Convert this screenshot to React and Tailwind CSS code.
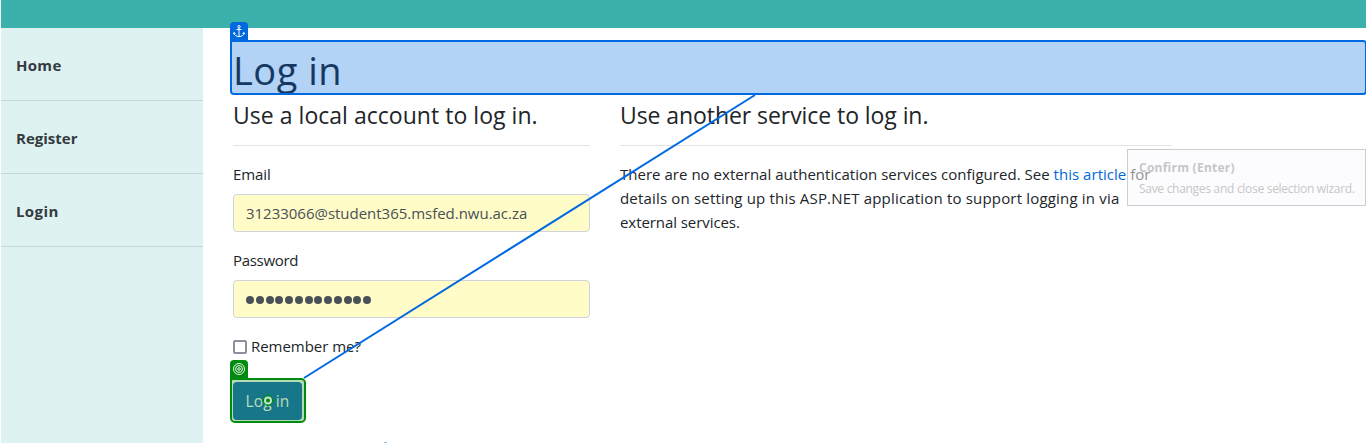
const NAV = [
  { label: "Home", className: "tracking-[0.3px]" },
  { label: "Register", className: "tracking-[0px]" },
  { label: "Login", className: "tracking-[0.4px]" },
];

function Field({ label, labelClass, children }) {
  return (
    <div className="mb-4 h-[70px]">
      <div className="mb-2 h-6 leading-6">
        <span className={labelClass}>{label}</span>
      </div>
      <div className="flex h-[38px] items-center rounded-[4px] border border-[#ced4da] bg-[#fffcc8] px-3 text-[#495057]">
        {children}
      </div>
    </div>
  );
}

export default function App() {
  return (
    <div className="relative flex h-[443px] w-[1366px] flex-col overflow-hidden bg-white pl-px font-['Open_Sans','Noto_Sans',sans-serif] text-[15px] text-[#212529]">
      <header className="h-7 shrink-0 bg-[#3cb0aa]" />
      <div className="flex grow">
        <nav className="w-[202px] shrink-0 bg-[#def2f1]">
          {NAV.map((n) => (
            <a key={n.label} className="flex h-[73px] items-center border-b border-[#c3d9d9] pt-[3px] pl-[15px] font-bold text-[#343a40]">
              <span className={n.className}>{n.label}</span>
            </a>
          ))}
        </nav>
        <main className="flex grow flex-col pt-[18px] pl-[30px]">
          <h1 className="mb-2 h-12 text-[38px] leading-[48px]"><span className="tracking-[0.5px]">Log in</span></h1>
          <div className="flex gap-[30px]">
            <section className="w-[357px] shrink-0">
              <h4 className="h-[29px] text-[23px] leading-[27px]"><span className="tracking-[0.03px]">Use a local account to log in.</span></h4>
              <hr className="mt-[14px] mb-4 border-[#e3e3e4]" />
              <Field label="Email" labelClass="tracking-[-0.1px]">
                <span className="tracking-[-0.02px]">31233066@student365.msfed.nwu.ac.za</span>
              </Field>
              <Field label="Password" labelClass="tracking-[-0.3px]">
                <span className="flex gap-[1.75px] pt-[2px]">
                  {Array.from({ length: 13 }, (_, i) => (
                    <i key={i} className="size-2 rounded-full bg-[#495057]" />
                  ))}
                </span>
              </Field>
              <label className="flex h-6 items-center gap-1">
                <span className="mt-px size-[14px] rounded-[2px] border-2 border-[#8f8f9d] bg-white" />
                <span className="tracking-[-0.03px]">Remember me?</span>
              </label>
              <div className="mt-6 flex h-[38px] w-[69px] items-center justify-center rounded-[4px] bg-[#216fbf] pt-px text-[15.5px] text-white">
                <span className="tracking-[0.1px]">Log in</span>
              </div>
            </section>
            <section className="w-[552px] shrink-0">
              <h4 className="h-[29px] text-[23px] leading-[27px]"><span className="tracking-[-0.07px]">Use another service to log in.</span></h4>
              <hr className="mt-[14px] mb-4 border-[#e3e3e4]" />
              <p className="leading-6 whitespace-nowrap">
                <span className="tracking-[0.026px]">There are no external authentication services configured. See <a className="text-[#0069d9]">this article</a> for</span><br />
                <span className="tracking-[0.18px]">details on setting up this ASP.NET application to support logging in via</span><br />
                <span className="tracking-[-0.07px]">external services.</span>
              </p>
            </section>
          </div>
        </main>
      </div>

      {/* anchor selection */}
      <div className="absolute top-[40px] left-[230px] h-[55px] w-[1137px] rounded-[4px] rounded-tl-none border-2 border-[#0069df] bg-[#0069e1]/30 bg-clip-padding" />
      <div className="absolute top-[22px] left-[230px] flex h-[19px] w-[18px] justify-center rounded-t-[4px] bg-[#0069df] pt-[3px]">
        <svg width="12" height="13" viewBox="0 0 12 13" fill="none" stroke="#fff" strokeWidth="1">
          <circle cx="6" cy="1.7" r="1.2" />
          <path d="M6 3V12M3.5 4.5H8.500M.9 7.800C1.2 10 3.2 11.500 6 11.700C8.800 11.500 10.800 10 11.100 7.800M.3 9.200L1 7.500L2.500 8.700M11.700 9.200L11 7.500L9.500 8.700" />
        </svg>
      </div>

      {/* target selection */}
      <div className="absolute top-[378px] left-[230px] h-[45px] w-[76px] rounded-[5px] rounded-tl-none border-2 border-[#008a0e] bg-[#008a0e]/30 bg-clip-padding" />
      <div className="absolute top-[360px] left-[230px] flex h-[19px] w-[18px] justify-center rounded-t-[4px] bg-[#008a0e] pt-[3px]">
        <svg width="12" height="12" viewBox="0 0 12 12" fill="none" stroke="#fff" strokeWidth="0.9">
          <circle cx="6" cy="6" r="5.5" />
          <circle cx="6" cy="6" r="3.4" />
          <circle cx="6" cy="6" r="1.3" />
        </svg>
      </div>

      <svg className="absolute top-0 left-0" width="1366" height="443" fill="none">
        <path d="M755 95L304 378" stroke="#0069df" strokeWidth="2" />
        <path d="M268 394L274.500 400.500L268 407L261.500 400.500Z" fill="#008a0e" />
        <circle cx="268" cy="400.500" r="5" fill="#008a0e" />
        <circle cx="268" cy="400.500" r="3" stroke="#c3e0d4" strokeWidth="2" />
        <path d="M384.500 442.500h2" stroke="#4f9be6" />
      </svg>

      <aside className="absolute top-[149px] left-[1127px] h-[57px] w-[239px] border border-[#cbcdd0] bg-[#f9fafd]/50 pt-[7px] pl-[11px] text-[12px] leading-[21px] whitespace-nowrap text-[#c6c6c8]">
        <div className="font-bold"><span className="tracking-[0.25px]">Confirm (Enter)</span></div>
        <div><span className="tracking-[-0.29px]">Save changes and close selection wizard.</span></div>
      </aside>
    </div>
  );
}
